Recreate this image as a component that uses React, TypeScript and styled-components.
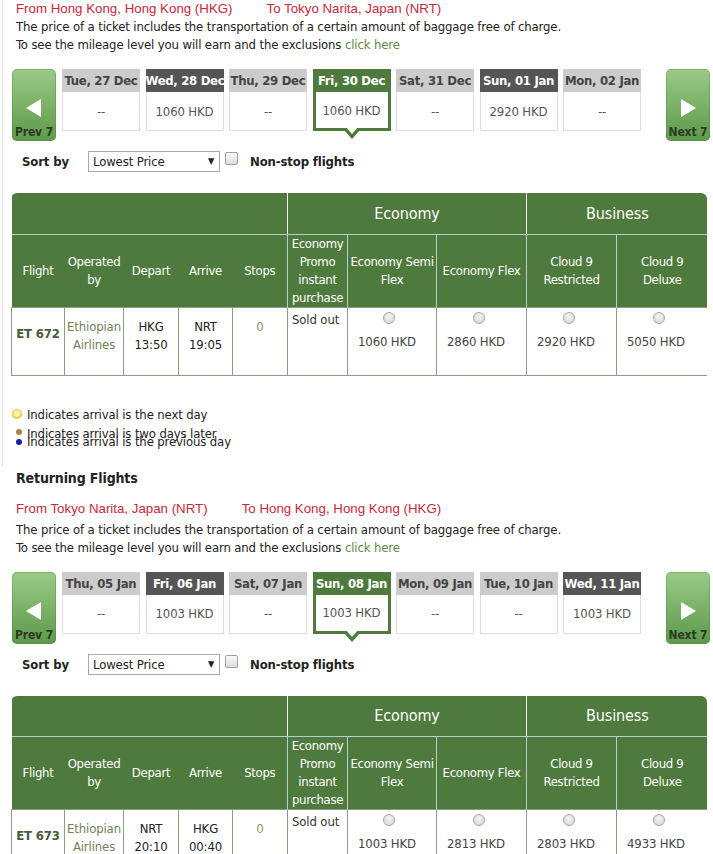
import styled, { createGlobalStyle } from "styled-components";

const GREEN = "#4f7a3e";

const GlobalStyle = createGlobalStyle`
  body {
    margin: 0;
    background: #fff;
    font-family: "DejaVu Sans Condensed", "DejaVu Sans", sans-serif;
    font-size: 13px;
    letter-spacing: -0.13px;
    color: #222;
  }
`;

const StyledPage = styled.div`
  width: 713px;
`;

const StyledSection = styled.section<{ $bordered?: boolean }>`
  margin-left: 2px;
  border-left: 1px solid ${(p) => (p.$bordered ? "#e4e4e4" : "transparent")};
  padding: 0 3px ${(p) => (p.$bordered ? "16px" : "0")} 8px;
  width: 699px;
`;

const StyledRoute = styled.div<{ $gap: number }>`
  padding-left: 5px;
  margin-bottom: ${(p) => p.$gap}px;
  font-family: "Liberation Sans", Arial, sans-serif;
  font-size: 13.3px;
  letter-spacing: 0;
  line-height: 18px;
  color: #c8283a;
  span + span {
    margin-left: 34px;
  }
`;

const StyledInfo = styled.p`
  margin: 0;
  padding-left: 5px;
  line-height: 18px;
  a {
    color: #5f8a45;
    text-decoration: none;
  }
`;

const StyledStrip = styled.div`
  display: flex;
  align-items: flex-start;
  margin-top: 15px;
  padding-left: 1px;
`;

const StyledNav = styled.div`
  width: 44px;
  height: 72px;
  border-radius: 5px;
  background: linear-gradient(#9acb88, #72aa5f 65%, #5e9a4c);
  box-shadow: inset 0 0 0 1px rgba(80, 130, 60, 0.35);
  display: flex;
  flex-direction: column;
  align-items: center;
  justify-content: flex-end;
  gap: 8px;
  padding-bottom: 2px;
  box-sizing: border-box;
  span {
    font-size: 12px;
    font-weight: bold;
    color: #2b3a25;
    line-height: 14px;
  }
  &:last-child {
    margin-left: auto;
  }
`;

const StyledDays = styled.div`
  width: 579px;
  margin-left: 6px;
  display: flex;
  justify-content: space-between;
`;

const StyledDay = styled.div<{ $tone: "grey" | "dark" | "green" }>`
  width: 78px;
  display: flex;
  flex-direction: column;
  header {
    height: 23px;
    line-height: 23px;
    text-align: center;
    font-weight: bold;
    white-space: nowrap;
    overflow: hidden;
    letter-spacing: -0.3px;
    background: ${(p) => (p.$tone === "grey" ? "#cccccc" : p.$tone === "dark" ? "#555555" : GREEN)};
    color: ${(p) => (p.$tone === "grey" ? "#444" : "#fff")};
  }
`;

const StyledDayBody = styled.div<{ $selected?: boolean }>`
  position: relative;
  height: 39px;
  box-sizing: border-box;
  display: flex;
  align-items: center;
  justify-content: center;
  color: #555;
  background: #fff;
  border: ${(p) => (p.$selected ? `3px solid ${GREEN}` : "1px solid #dddddd")};
  border-top: none;
  &::before,
  &::after {
    content: "";
    display: ${(p) => (p.$selected ? "block" : "none")};
    position: absolute;
    left: 50%;
    width: 0;
    height: 0;
    border-style: solid;
  }
  &::before {
    bottom: -11px;
    margin-left: -9px;
    border-width: 10px 9px 0 9px;
    border-color: ${GREEN} transparent transparent transparent;
  }
  &::after {
    bottom: -6px;
    margin-left: -6px;
    border-width: 7px 6px 0 6px;
    border-color: #fff transparent transparent transparent;
  }
`;

const StyledSortRow = styled.div`
  display: flex;
  align-items: center;
  height: 21px;
  margin-top: 10px;
  padding-left: 11px;
  font-weight: bold;
`;

const StyledSortLabel = styled.span`
  width: 66px;
`;

const StyledSelect = styled.div`
  position: relative;
  width: 132px;
  height: 21px;
  box-sizing: border-box;
  border: 1px solid #a9a9a9;
  background: #fff;
  font-weight: normal;
  line-height: 19px;
  padding-left: 4px;
  color: #222;
  i {
    position: absolute;
    right: 5px;
    top: 0;
    font-style: normal;
    font-size: 9px;
  }
`;

const StyledCheck = styled.span`
  width: 11px;
  height: 11px;
  margin: 0 12px 6px 5px;
  border: 1px solid #a0a0a0;
  border-radius: 2px;
  background: linear-gradient(#fafafa, #dcdcdc);
`;

const StyledTableWrap = styled.div`
  margin-top: 21px;
  width: 696px;
  border-radius: 6px 6px 0 0;
  overflow: hidden;
`;

const StyledTable = styled.table`
  width: 696px;
  table-layout: fixed;
  border-collapse: collapse;
`;

const StyledGroupRow = styled.tr`
  height: 41px;
  background: ${GREEN};
  th {
    color: #fff;
    font-weight: normal;
    font-size: 16px;
    text-align: center;
    border-bottom: 1px solid #b4cfcc;
    padding: 0;
  }
  th + th {
    border-left: 1px solid #f0f4f0;
  }
`;

const StyledHeadRow = styled.tr`
  height: 73px;
  background: ${GREEN};
  th {
    color: #fff;
    font-weight: normal;
    line-height: 18px;
    letter-spacing: -0.3px;
    text-align: center;
    vertical-align: middle;
    white-space: nowrap;
    padding: 0;
  }
  th:nth-child(n + 6) {
    border-left: 1px solid #b4cfcc;
  }
`;

const StyledDataRow = styled.tr`
  height: 68px;
  td {
    border: 1px solid #8e9c86;
    vertical-align: top;
    line-height: 18px;
    padding: 0;
    background: #fff;
  }
`;

const StyledCell = styled.td<{ $pt: number; $pl?: number; $align?: string; $color?: string; $bold?: boolean }>`
  padding-top: ${(p) => p.$pt}px !important;
  padding-left: ${(p) => p.$pl ?? 0}px !important;
  text-align: ${(p) => p.$align ?? "center"};
  color: ${(p) => p.$color ?? "#222"};
  font-weight: ${(p) => (p.$bold ? "bold" : "normal")};
`;

const StyledFare = styled.td`
  padding: 4px 0 0 10px !important;
  color: #444;
`;

const StyledRadio = styled.span`
  display: block;
  width: 12px;
  height: 12px;
  margin: 0 auto 9px;
  position: relative;
  left: -8px;
  box-sizing: border-box;
  border-radius: 50%;
  border: 1px solid #a8a8a8;
  background: radial-gradient(circle at 50% 35%, #f4f4f4, #d2d2d2);
`;

const StyledLegend = styled.div`
  margin-top: 30px;
  padding-left: 1px;
`;

const StyledLegendItem = styled.div<{ $overlap?: boolean }>`
  display: flex;
  align-items: center;
  line-height: 18px;
  margin-top: ${(p) => (p.$overlap ? "-10px" : "1px")};
  color: #222;
`;

const StyledDot = styled.span<{ $kind: "next" | "two" | "prev" }>`
  width: ${(p) => (p.$kind === "next" ? "10px" : "6px")};
  height: ${(p) => (p.$kind === "next" ? "10px" : "6px")};
  margin: ${(p) => (p.$kind === "next" ? "0 5px 1px 0" : p.$kind === "two" ? "0 5px 4px 4px" : "0 5px 0 4px")};
  border-radius: 50%;
  background: ${(p) =>
    p.$kind === "next"
      ? "radial-gradient(circle at 50% 45%, #fff3a8 0 35%, #f2c93a 60%, #d9a82a)"
      : p.$kind === "two"
        ? "#b5803e"
        : "#1620a0"};
`;

const StyledHeading = styled.h3`
  margin: 0 0 11px;
  padding-left: 16px;
  font-size: 14px;
  line-height: 22px;
  color: #222;
`;

type Day = { label: string; price?: string; selected?: boolean };

type Trip = {
  from: string;
  to: string;
  days: Day[];
  flight: string;
  dep: [string, string];
  arr: [string, string];
  prices: string[];
};

const outbound: Trip = {
  from: "From Hong Kong, Hong Kong (HKG)",
  to: "To Tokyo Narita, Japan (NRT)",
  days: [
    { label: "Tue, 27 Dec" },
    { label: "Wed, 28 Dec", price: "1060 HKD" },
    { label: "Thu, 29 Dec" },
    { label: "Fri, 30 Dec", price: "1060 HKD", selected: true },
    { label: "Sat, 31 Dec" },
    { label: "Sun, 01 Jan", price: "2920 HKD" },
    { label: "Mon, 02 Jan" },
  ],
  flight: "ET 672",
  dep: ["HKG", "13:50"],
  arr: ["NRT", "19:05"],
  prices: ["1060 HKD", "2860 HKD", "2920 HKD", "5050 HKD"],
};

const inbound: Trip = {
  from: "From Tokyo Narita, Japan (NRT)",
  to: "To Hong Kong, Hong Kong (HKG)",
  days: [
    { label: "Thu, 05 Jan" },
    { label: "Fri, 06 Jan", price: "1003 HKD" },
    { label: "Sat, 07 Jan" },
    { label: "Sun, 08 Jan", price: "1003 HKD", selected: true },
    { label: "Mon, 09 Jan" },
    { label: "Tue, 10 Jan" },
    { label: "Wed, 11 Jan", price: "1003 HKD" },
  ],
  flight: "ET 673",
  dep: ["NRT", "20:10"],
  arr: ["HKG", "00:40"],
  prices: ["1003 HKD", "2813 HKD", "2803 HKD", "4933 HKD"],
};

const colWidths = [53, 59, 55, 54, 55, 60, 89, 90, 90, 91];

const fareHeads = [
  ["Economy", "Promo", "instant", "purchase"],
  ["Economy Semi", "Flex"],
  ["Economy Flex"],
  ["Cloud 9", "Restricted"],
  ["Cloud 9", "Deluxe"],
];

function Arrow({ dir }: { dir: "left" | "right" }) {
  return (
    <svg width="16" height="18" viewBox="0 0 16 18">
      <polygon points={dir === "left" ? "15,0 15,18 0,9" : "1,0 1,18 16,9"} fill="#fff" />
    </svg>
  );
}

function Lines({ lines }: { lines: string[] }) {
  return (
    <>
      {lines.map((l, i) => (
        <span key={i}>
          {i > 0 && <br />}
          {l}
        </span>
      ))}
    </>
  );
}

function TripBlock({
  trip,
  bordered,
  routeGap = 0,
  children,
}: {
  trip: Trip;
  bordered?: boolean;
  routeGap?: number;
  children?: React.ReactNode;
}) {
  return (
    <StyledSection $bordered={bordered}>
      <StyledRoute $gap={routeGap}>
        <span>{trip.from}</span>
        <span>{trip.to}</span>
      </StyledRoute>
      <StyledInfo>
        The price of a ticket includes the transportation of a certain amount of baggage free of charge.
        <br />
        To see the mileage level you will earn and the exclusions <a href="#">click here</a>
      </StyledInfo>

      <StyledStrip>
        <StyledNav>
          <Arrow dir="left" />
          <span>Prev 7</span>
        </StyledNav>
        <StyledDays>
          {trip.days.map((d) => (
            <StyledDay key={d.label} $tone={d.selected ? "green" : d.price ? "dark" : "grey"}>
              <header>{d.label}</header>
              <StyledDayBody $selected={d.selected}>{d.price ?? "--"}</StyledDayBody>
            </StyledDay>
          ))}
        </StyledDays>
        <StyledNav>
          <Arrow dir="right" />
          <span>Next 7</span>
        </StyledNav>
      </StyledStrip>

      <StyledSortRow>
        <StyledSortLabel>Sort by</StyledSortLabel>
        <StyledSelect>
          Lowest Price<i>▼</i>
        </StyledSelect>
        <StyledCheck />
        <span>Non-stop flights</span>
      </StyledSortRow>

      <StyledTableWrap>
        <StyledTable>
          <colgroup>
            {colWidths.map((w, i) => (
              <col key={i} style={{ width: w }} />
            ))}
          </colgroup>
          <thead>
            <StyledGroupRow>
              <th colSpan={5} />
              <th colSpan={3}>Economy</th>
              <th colSpan={2}>Business</th>
            </StyledGroupRow>
            <StyledHeadRow>
              <th>Flight</th>
              <th>
                <Lines lines={["Operated", "by"]} />
              </th>
              <th>Depart</th>
              <th>Arrive</th>
              <th>Stops</th>
              {fareHeads.map((h, i) => (
                <th key={i}>
                  <Lines lines={h} />
                </th>
              ))}
            </StyledHeadRow>
          </thead>
          <tbody>
            <StyledDataRow>
              <StyledCell $pt={17} $bold $color="#4a5a3a">
                {trip.flight}
              </StyledCell>
              <StyledCell $pt={10} $color="#6f7f57">
                <Lines lines={["Ethiopian", "Airlines"]} />
              </StyledCell>
              <StyledCell $pt={10}>
                <Lines lines={trip.dep} />
              </StyledCell>
              <StyledCell $pt={10}>
                <Lines lines={trip.arr} />
              </StyledCell>
              <StyledCell $pt={10} $color="#8a9a70">
                0
              </StyledCell>
              <StyledCell $pt={3} $pl={4} $align="left" $color="#333">
                Sold out
              </StyledCell>
              {trip.prices.map((p) => (
                <StyledFare key={p}>
                  <StyledRadio />
                  {p}
                </StyledFare>
              ))}
            </StyledDataRow>
          </tbody>
        </StyledTable>
      </StyledTableWrap>
      {children}
    </StyledSection>
  );
}

export default function App() {
  return (
    <StyledPage>
      <GlobalStyle />
      <TripBlock trip={outbound} bordered>
        <StyledLegend>
          <StyledLegendItem>
            <StyledDot $kind="next" />
            Indicates arrival is the next day
          </StyledLegendItem>
          <StyledLegendItem>
            <StyledDot $kind="two" />
            Indicates arrival is two days later
          </StyledLegendItem>
          <StyledLegendItem $overlap>
            <StyledDot $kind="prev" />
            Indicates arrival is the previous day
          </StyledLegendItem>
        </StyledLegend>
      </TripBlock>
      <StyledHeading>Returning Flights</StyledHeading>
      <TripBlock trip={inbound} routeGap={3} />
    </StyledPage>
  );
}
